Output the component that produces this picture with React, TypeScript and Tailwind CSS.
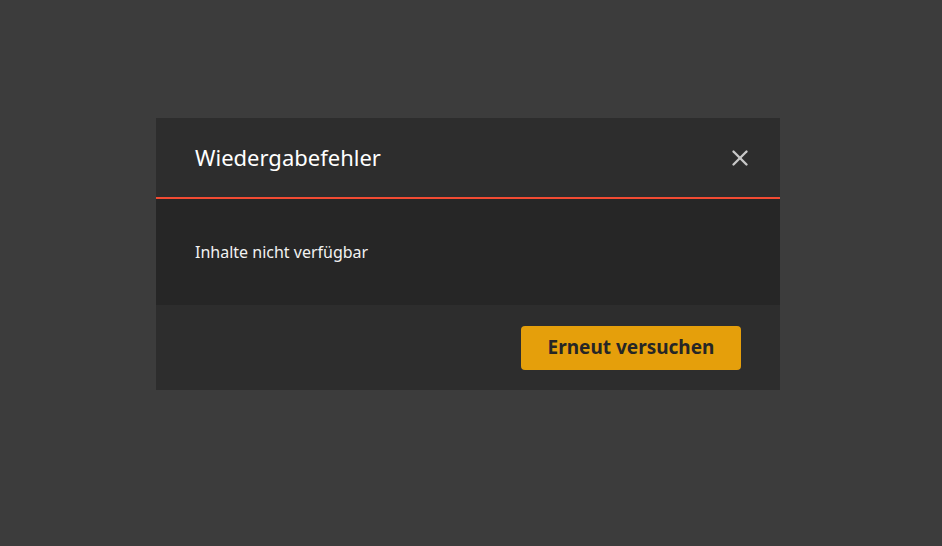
import { X } from "lucide-react";

export default function App() {
  return (
    <div className="w-full h-[546px] bg-[#3c3c3c] flex items-start justify-start pl-[156px] pt-[118px] font-['Noto_Sans','Open_Sans',sans-serif]">
      <div className="w-[624px] flex flex-col">
        <div className="h-[81px] bg-[#2d2d2d] border-b-2 border-[#f24b33] flex items-center justify-between pl-[39px] pr-[27px]">
          <h1 className="text-[22px] text-white font-normal">Wiedergabefehler</h1>
          <button className="text-[#c8c8c8]">
            <X size={26} strokeWidth={2.2} />
          </button>
        </div>
        <div className="h-[106px] bg-[#262626] flex items-center pl-[39px]">
          <p className="text-[16px] text-[#f2f2f2]">Inhalte nicht verfügbar</p>
        </div>
        <div className="h-[85px] bg-[#2d2d2d] flex items-center justify-end pr-[39px]">
          <button className="w-[220px] h-[44px] rounded-[4px] bg-[#e59f0b] text-[#262626] text-[19px] font-bold">
            Erneut versuchen
          </button>
        </div>
      </div>
    </div>
  );
}
